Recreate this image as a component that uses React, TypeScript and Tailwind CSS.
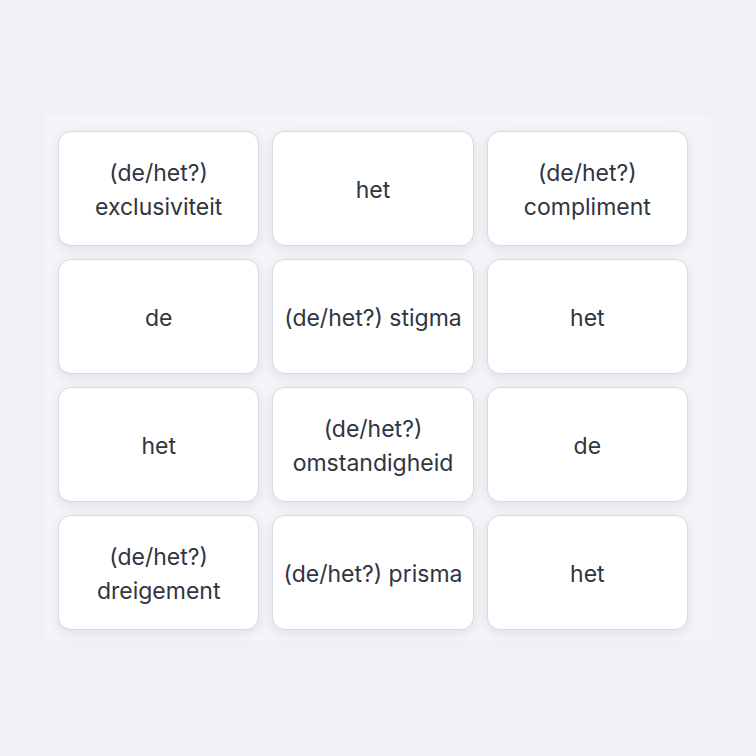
import React from "react";

const cards: string[][] = [
  ["(de/het?)", "exclusiviteit"],
  ["het"],
  ["(de/het?)", "compliment"],
  ["de"],
  ["(de/het?) stigma"],
  ["het"],
  ["het"],
  ["(de/het?)", "omstandigheid"],
  ["de"],
  ["(de/het?)", "dreigement"],
  ["(de/het?) prisma"],
  ["het"],
];

export default function App() {
  return (
    <div className="w-[756px] h-[756px] bg-[#eff1f5] pt-[116px] pl-[45px]" style={{ fontFamily: "Inter, 'Open Sans', sans-serif" }}>
      <div className="w-[666px] h-[524px] bg-[#f4f5f8] pl-[13px] pr-[23px] pt-[15px] pb-[10px]">
        <div className="grid grid-cols-3 gap-[13px]">
          {cards.map((lines, i) => (
            <div
              key={i}
              className="h-[115px] pt-[3px] bg-white rounded-[13px] border-[1.5px] border-[#d6d9e2] shadow-[0_3px_12px_rgba(60,70,110,0.12)] flex flex-col items-center justify-center text-center text-[23px] leading-[34px] text-[#2f3541]"
            >
              {lines.map((l, j) => (
                <div key={j}>{l}</div>
              ))}
            </div>
          ))}
        </div>
      </div>
    </div>
  );
}
